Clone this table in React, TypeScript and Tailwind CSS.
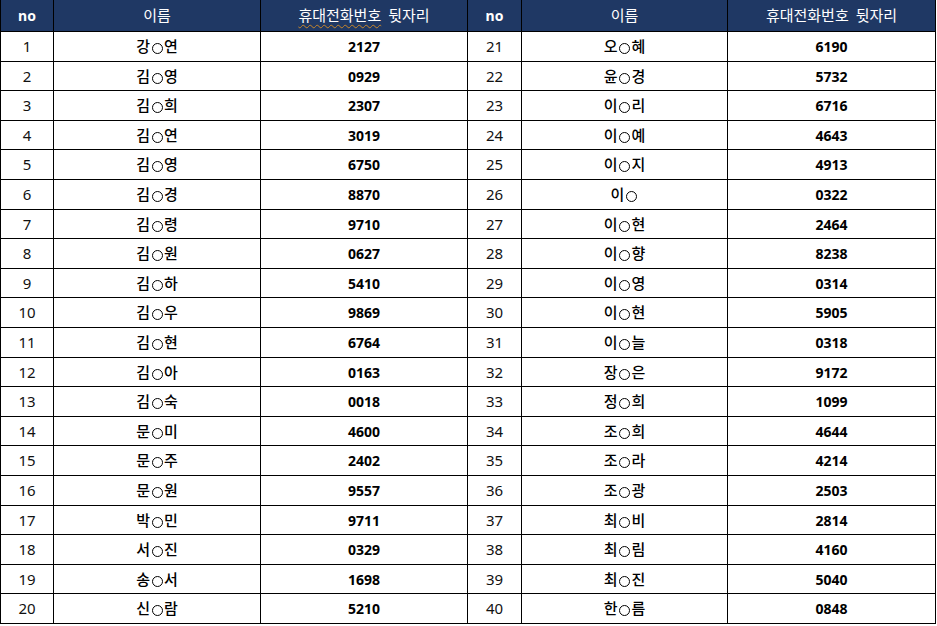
import React from "react";

const left: [string, string, string][] = [
  ["강", "연", "2127"],
  ["김", "영", "0929"],
  ["김", "희", "2307"],
  ["김", "연", "3019"],
  ["김", "영", "6750"],
  ["김", "경", "8870"],
  ["김", "령", "9710"],
  ["김", "원", "0627"],
  ["김", "하", "5410"],
  ["김", "우", "9869"],
  ["김", "현", "6764"],
  ["김", "아", "0163"],
  ["김", "숙", "0018"],
  ["문", "미", "4600"],
  ["문", "주", "2402"],
  ["문", "원", "9557"],
  ["박", "민", "9711"],
  ["서", "진", "0329"],
  ["송", "서", "1698"],
  ["신", "람", "5210"],
];

const right: [string, string, string][] = [
  ["오", "혜", "6190"],
  ["윤", "경", "5732"],
  ["이", "리", "6716"],
  ["이", "예", "4643"],
  ["이", "지", "4913"],
  ["이", "", "0322"],
  ["이", "현", "2464"],
  ["이", "향", "8238"],
  ["이", "영", "0314"],
  ["이", "현", "5905"],
  ["이", "늘", "0318"],
  ["장", "은", "9172"],
  ["정", "희", "1099"],
  ["조", "희", "4644"],
  ["조", "라", "4214"],
  ["조", "광", "2503"],
  ["최", "비", "2814"],
  ["최", "림", "4160"],
  ["최", "진", "5040"],
  ["한", "름", "0848"],
];

function Name({ a, b }: { a: string; b: string }) {
  return (
    <span className="flex items-center justify-center text-[15px] font-medium text-black font-['Noto_Sans_CJK_KR',sans-serif]">
      <span>{a}</span>
      <span className="inline-block w-[11px] h-[11px] rounded-full border border-black mx-[1.5px] translate-y-[2px]" />
      {b && <span>{b}</span>}
    </span>
  );
}

function HeaderCells({ squiggle }: { squiggle: boolean }) {
  return (
    <>
      <div className="bg-[#1f3864] h-[31px] flex items-center justify-center text-white text-[14px] font-bold">no</div>
      <div className="bg-[#1f3864] flex items-center justify-center text-white text-[15px] font-['Noto_Sans_CJK_KR',sans-serif]">이름</div>
      <div className="bg-[#1f3864] flex items-center justify-center text-white text-[15px] font-['Noto_Sans_CJK_KR',sans-serif]">
        <span
          className={
            squiggle
              ? "underline decoration-wavy decoration-[#c8862a] decoration-1 underline-offset-[3px]"
              : ""
          }
        >
          휴대전화번호
        </span>
        <span className="ml-[7px]">뒷자리</span>
      </div>
    </>
  );
}

export default function App() {
  const rows = Array.from({ length: 20 }, (_, i) => i);
  return (
    <div className="w-[937px] h-[626px] bg-white font-['Noto_Sans','Noto_Sans_CJK_KR',sans-serif]">
      <div className="w-[936px] bg-black pl-px pr-px pb-px grid grid-cols-[52px_206px_206px_53px_205px_207px] gap-px">
        <HeaderCells squiggle={true} />
        <HeaderCells squiggle={false} />
        {rows.map((i) => {
          const pitch =
            Math.round(31 + 29.6 * (i + 1)) - Math.round(31 + 29.6 * i);
          const h = pitch === 30 ? "h-[29px]" : "h-[28px]";
          const l = left[i];
          const r = right[i];
          return (
            <React.Fragment key={i}>
              <div className={`bg-white ${h} flex items-center justify-center text-[15px] text-[#111]`}>{i + 1}</div>
              <div className="bg-white flex items-center justify-center">
                <Name a={l[0]} b={l[1]} />
              </div>
              <div className="bg-white flex items-center justify-center text-[14px] font-bold text-black">{l[2]}</div>
              <div className="bg-white flex items-center justify-center text-[15px] text-[#111]">{i + 21}</div>
              <div className="bg-white flex items-center justify-center">
                <Name a={r[0]} b={r[1]} />
              </div>
              <div className="bg-white flex items-center justify-center text-[14px] font-bold text-black">{r[2]}</div>
            </React.Fragment>
          );
        })}
      </div>
    </div>
  );
}
